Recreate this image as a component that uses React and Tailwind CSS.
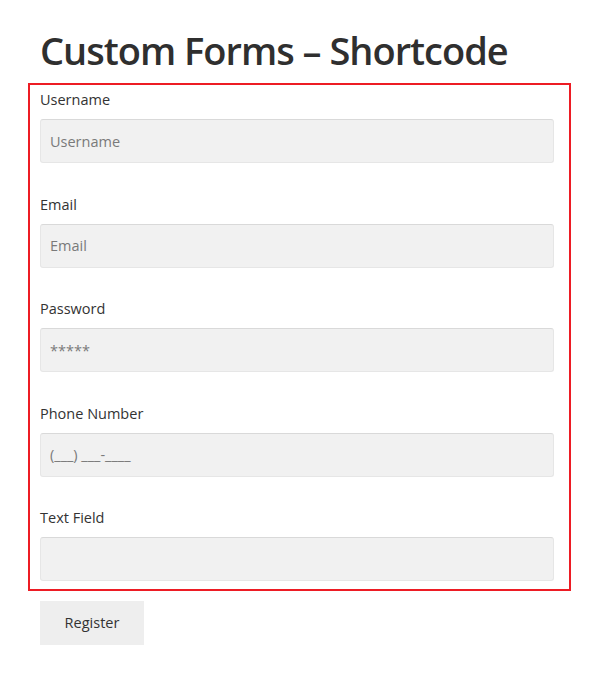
import React from "react";

const fields = [
  { label: "Username", placeholder: "Username", type: "text" },
  { label: "Email", placeholder: "Email", type: "email" },
  { label: "Password", placeholder: "*****", type: "text" },
  { label: "Phone Number", placeholder: "(___) ___-____", type: "text" },
  { label: "Text Field", placeholder: "", type: "text" },
];

export default function App() {
  return (
    <div className="w-[590px] h-[685px] bg-white text-[#333] [font-family:'Open_Sans','Noto_Sans',sans-serif]">
      <div className="pl-[40px] pt-[24px]">
        <h1 className="text-[38px] leading-[52px] font-semibold text-[#2f2f2f] tracking-[-1px]">
          Custom Forms – Shortcode
        </h1>
      </div>
      <div className="mt-[7px] ml-[28px] w-[543px] border-2 border-[#ed1c24] px-[10px] pt-[4px] pb-[8px]">
        {fields.map((f, i) => (
          <div key={i} className={i < fields.length - 1 ? "mb-[30.5px]" : ""}>
            <label className="block text-[14.5px] leading-[22px] text-[#333] mb-[8px]">{f.label}</label>
            <input
              type={f.type}
              placeholder={f.placeholder}
              className="block w-[514px] h-[44px] rounded-[3px] bg-[#f1f1f1] border border-[#e6e6e6] border-t-[#d9d9d9] px-[9px] text-[14.5px] text-[#333] placeholder:text-[#7a7a7a] outline-none"
            />
          </div>
        ))}
      </div>
      <div className="pl-[40px] pt-[10px]">
        <button className="w-[104px] h-[44px] bg-[#eeeeee] text-[14.5px] font-medium text-[#333]">
          Register
        </button>
      </div>
    </div>
  );
}
